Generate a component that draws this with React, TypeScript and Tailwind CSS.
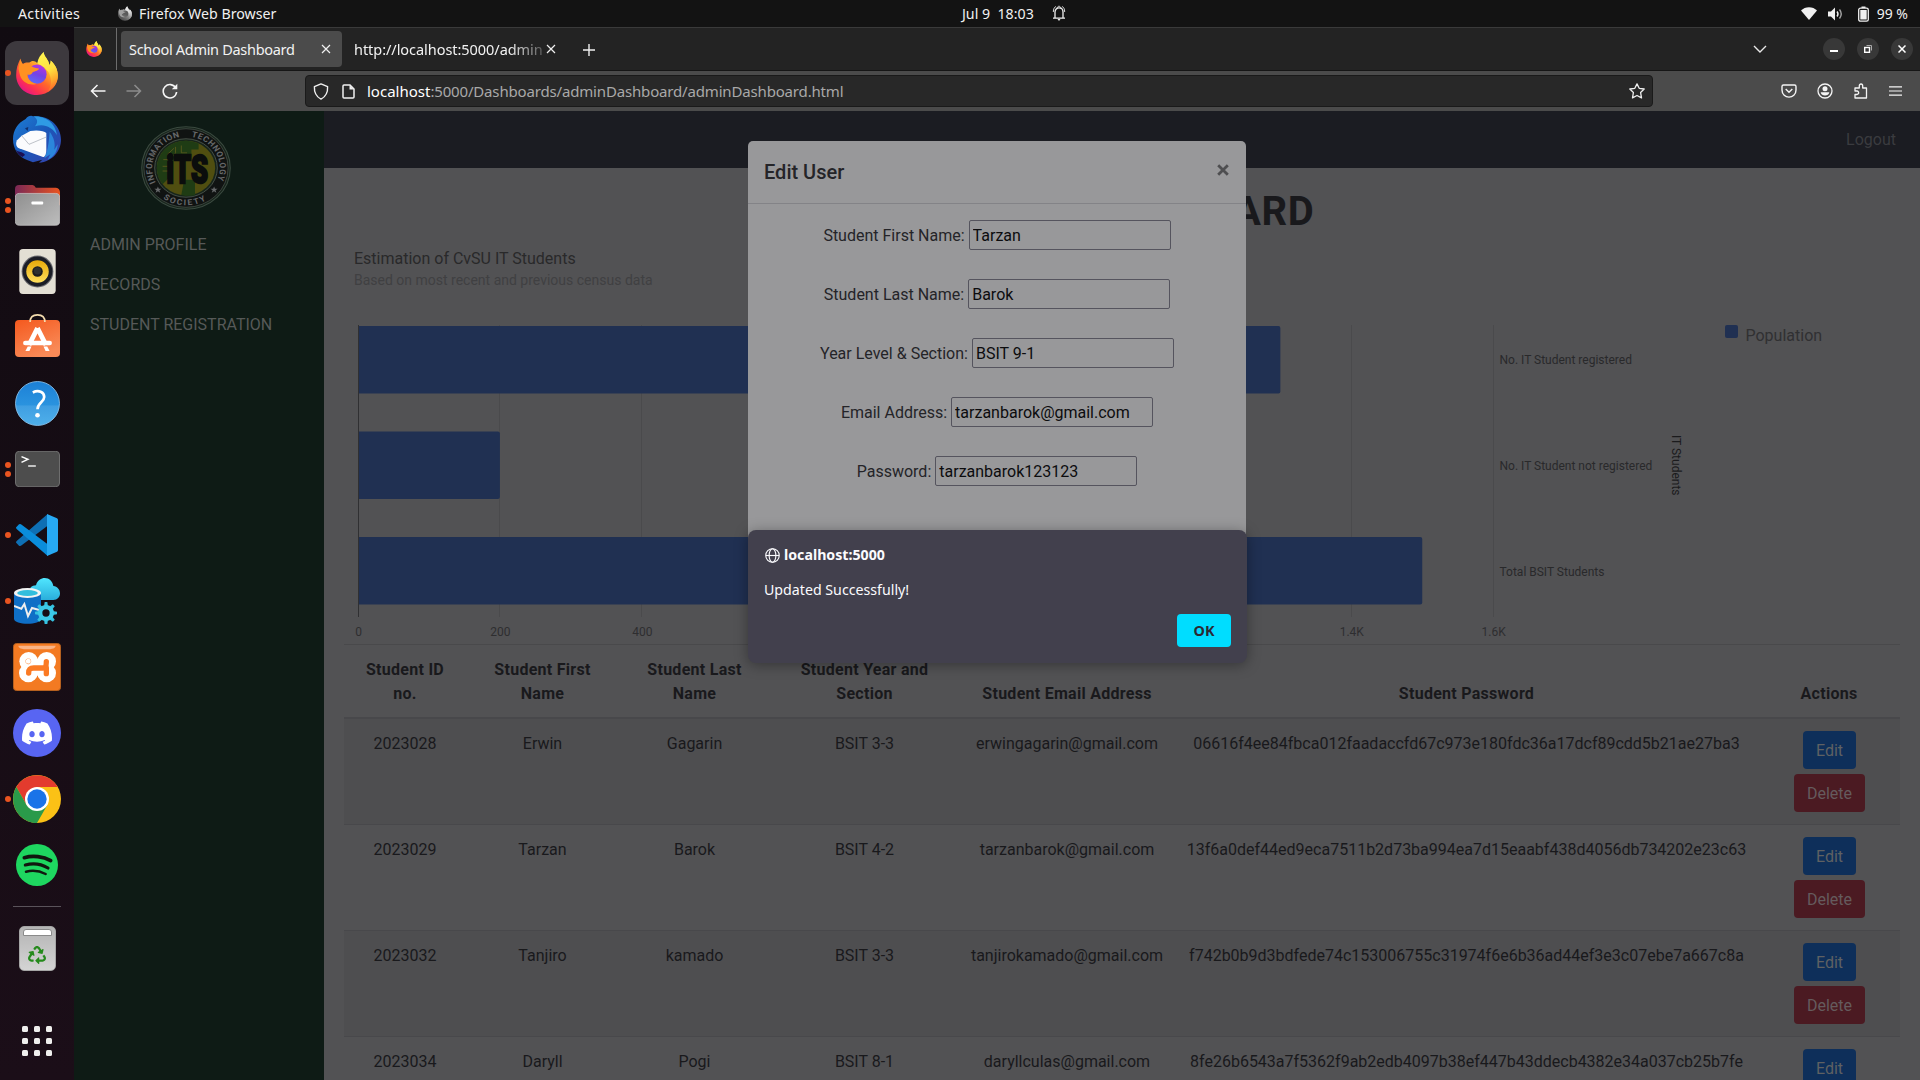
import React from "react";
import { FaRecycle } from "react-icons/fa";
import { SiDiscord } from "react-icons/si";

const UI = "font-['Noto_Sans','Open_Sans',sans-serif]";

/* ---------- Application icons ---------- */

function FirefoxIcon({ id, className }: { id: string; className: string }) {
  return (
    <svg viewBox="0 0 126 130" className={className}>
      <defs>
        <linearGradient id={`${id}-body`} x1="0.85" y1="0.1" x2="0.2" y2="0.95">
          <stop offset="0" stopColor="#fff44f" />
          <stop offset="0.3" stopColor="#ffb62a" />
          <stop offset="0.55" stopColor="#ff6a2a" />
          <stop offset="0.8" stopColor="#ff3150" />
          <stop offset="1" stopColor="#e31587" />
        </linearGradient>
        <linearGradient id={`${id}-globe`} x1="0.7" y1="0" x2="0.3" y2="1">
          <stop offset="0" stopColor="#b933e1" />
          <stop offset="0.5" stopColor="#7542e5" />
          <stop offset="1" stopColor="#5b6df8" />
        </linearGradient>
        <linearGradient id={`${id}-flame`} x1="0.3" y1="0" x2="0.6" y2="1">
          <stop offset="0" stopColor="#fff44f" />
          <stop offset="0.5" stopColor="#ffe141" />
          <stop offset="0.8" stopColor="#ffa52c" />
          <stop offset="1" stopColor="#ff6a2a" />
        </linearGradient>
      </defs>
      <path
        d="M83 0 C84 14 98 22 101 40 C104 34 105 30 104 26 C118 38 126 54 126 72 C126 104 98 130 63 130 C28 130 0 104 0 70 C0 50 5 36 13 20 C14 28 17 34 20 36 C27 31 33 32 40 32 C46 26 56 24 64 34 Z"
        fill={`url(#${id}-body)`}
      />
      <path
        d="M83 0 C84 14 98 22 101 40 C104 34 105 30 104 26 C118 38 126 54 126 72 C126 92 114 108 96 118 C108 104 108 84 100 66 C96 54 80 42 64 34 C66 18 74 8 83 0 Z"
        fill={`url(#${id}-flame)`}
      />
      <circle cx="63" cy="67" r="29" fill={`url(#${id}-globe)`} />
      <path
        d="M7 50 C8 38 12 28 14 22 C15 30 18 35 21 37 C28 33 36 34 42 38 C46 46 56 48 69 50 C68 56 58 58 50 61 C46 70 38 70 34 68 C34 84 48 94 62 96 C42 104 18 92 12 72 C10 64 8 56 7 50 Z"
        fill="#ff9122"
      />
    </svg>
  );
}

function ThunderbirdIcon() {
  return (
    <svg viewBox="0 0 144 144" className="size-12">
      <defs>
        <linearGradient id="tb" x1="0" y1="0" x2="1" y2="1">
          <stop offset="0" stopColor="#1c7fd6" />
          <stop offset="0.5" stopColor="#1b57b8" />
          <stop offset="1" stopColor="#3a3fae" />
        </linearGradient>
      </defs>
      <path d="M38 12 C44 4 54 0 60 4 C108 0 144 32 144 74 C144 108 118 140 78 143 L88 134 L60 142 L44 136 C16 126 0 102 0 72 C0 46 14 24 38 12 Z" fill="url(#tb)" />
      <path d="M62 4 C100 4 126 24 132 60 C118 36 92 24 66 34 C76 22 74 12 62 4 Z" fill="#2f9be4" />
      <path d="M110 50 C122 66 128 84 124 104 L134 88 C134 108 122 128 104 134 L112 118 L94 130 C106 104 108 74 110 50 Z" fill="#2b86dc" />
      <path d="M8 104 C14 112 30 108 36 120 L28 126 C18 120 12 112 8 104 Z" fill="#1c0f52" />
      <path d="M26 62 L52 48 C74 44 94 48 100 54 V104 C100 116 96 126 90 126 L18 100 C8 96 8 84 12 76 Z" fill="#fbfbfd" />
      <path d="M26 62 L48 88 L100 66" fill="none" stroke="#9fa4ae" strokeWidth="2" />
      <path d="M36 40 l10 -4 l-2 12 z" fill="#10306e" />
    </svg>
  );
}

function FilesIcon() {
  return (
    <svg viewBox="0 0 134 122" className="h-[41px] w-[45px]">
      <defs>
        <linearGradient id="fback" x1="0" y1="0" x2="1" y2="0">
          <stop offset="0" stopColor="#7a2856" />
          <stop offset="1" stopColor="#e95420" />
        </linearGradient>
        <linearGradient id="ffront" x1="0" y1="0" x2="1" y2="1">
          <stop offset="0" stopColor="#8f8f8f" />
          <stop offset="1" stopColor="#bdbdbd" />
        </linearGradient>
      </defs>
      <path d="M0 60 V12 Q0 0 12 0 H52 Q58 0 62 8 H122 Q134 10 134 22 V60 Z" fill="url(#fback)" />
      <rect x="1" y="25" width="132" height="95" rx="12" fill="url(#ffront)" stroke="#cfcfcf" strokeWidth="2" />
      <rect x="49" y="49" width="35" height="9" rx="3" fill="#fff" />
    </svg>
  );
}

function RhythmboxIcon() {
  return (
    <svg viewBox="0 0 110 136" className="h-[45px] w-[37px]">
      <defs>
        <linearGradient id="rb" x1="0" y1="0" x2="0" y2="1">
          <stop offset="0" stopColor="#e6a90a" />
          <stop offset="1" stopColor="#ffdf5c" />
        </linearGradient>
      </defs>
      <rect width="110" height="136" rx="11" fill="#e3dfd4" />
      <circle cx="55" cy="68" r="48" fill="#6b6b70" />
      <circle cx="55" cy="68" r="45" fill="#1b1d26" />
      <circle cx="55" cy="68" r="34" fill="url(#rb)" />
      <circle cx="55" cy="68" r="16" fill="#1d1d1f" />
      <circle cx="55" cy="66" r="11" fill="#2e3030" />
    </svg>
  );
}

function SoftwareIcon() {
  return (
    <svg viewBox="0 0 134 128" className="mb-[4px] h-[43px] w-[45px]">
      <defs>
        <linearGradient id="sw" x1="0" y1="0" x2="0.5" y2="1">
          <stop offset="0" stopColor="#f4591e" />
          <stop offset="1" stopColor="#f98a57" />
        </linearGradient>
      </defs>
      <rect y="18" width="134" height="110" rx="12" fill="url(#sw)" />
      <path d="M45 24 C45 8 54 2.500 67 2.500 C80 2.500 89 8 89 24" fill="none" stroke="#f3dcae" strokeWidth="5" />
      <path d="M67 42 L42 92 M67 42 L92 92" stroke="#fff" strokeWidth="14" strokeLinejoin="round" fill="none" />
      <rect x="24" y="80" width="86" height="13" rx="6.500" fill="#fff" />
      <path d="M38 97 l-7 13 h12 l6 -13 Z M96 97 l7 13 h-12 l-6 -13 Z" fill="#fff" />
    </svg>
  );
}

function HelpIcon() {
  return (
    <svg viewBox="0 0 134 134" className="size-[45px]">
      <defs>
        <linearGradient id="hp" x1="0" y1="0" x2="0" y2="1">
          <stop offset="0" stopColor="#1c80d6" />
          <stop offset="0.54" stopColor="#2a93df" />
          <stop offset="0.55" stopColor="#3f9ee2" />
          <stop offset="1" stopColor="#4fb0ea" />
        </linearGradient>
      </defs>
      <circle cx="67" cy="67" r="65.500" fill="url(#hp)" stroke="#8cc4ee" strokeWidth="2.500" />
      <path d="M53 34 C70 26 87 32 87 48 C87 63 67 64 67 84" fill="none" stroke="#fff" strokeWidth="8" />
      <circle cx="67" cy="102" r="7" fill="#fff" />
    </svg>
  );
}

function TerminalIcon() {
  return (
    <svg viewBox="0 0 134 108" className="h-9 w-[45px]">
      <rect x="1" y="1" width="132" height="106" rx="11" fill="#4d4d4d" stroke="#6e6e6e" strokeWidth="3" />
      <path d="M19 17 L38 25 L19 34" fill="none" stroke="#fff" strokeWidth="4.500" />
      <path d="M39 45 H62" stroke="#fff" strokeWidth="4" />
    </svg>
  );
}

function CodeIcon() {
  return (
    <svg viewBox="0 0 126 126" className="size-[42px]">
      <path d="M95 0 L2 81 Q-2 85 2 88 L9 95 Q13 97 17 94 L95 35 Z" fill="#0e6fb4" />
      <path d="M95 126 L2 45 Q-2 41 2 38 L9 31 Q13 29 17 32 L95 91 Z" fill="#0a8ddb" />
      <path d="M93 0 L123 13 Q126 15 126 18 V108 Q126 111 123 113 L93 126 Z" fill="#27a9f3" />
    </svg>
  );
}

function DataStudioIcon() {
  const teeth = [0, 45, 90, 135, 180, 225, 270, 315];
  return (
    <svg viewBox="0 0 138 138" className="size-[46px]">
      <defs>
        <linearGradient id="cl" x1="0" y1="0" x2="0" y2="1">
          <stop offset="0" stopColor="#50e6ff" />
          <stop offset="1" stopColor="#2aaedb" />
        </linearGradient>
      </defs>
      <path d="M50 28 C54 24 60 22 66 22 C70 6 82 0 92 0 C106 0 116 10 118 24 C130 26 138 34 138 46 C138 58 130 66 118 66 H70 C50 66 46 40 50 28 Z" fill="url(#cl)" />
      <path d="M0 46 V122 C0 142 81 142 81 122 V46 Z" fill="#0f6fc6" />
      <ellipse cx="40.500" cy="45" rx="40.500" ry="15" fill="#f3f3f3" />
      <ellipse cx="40.500" cy="45" rx="31" ry="9" fill="#32bedd" />
      <path d="M0 84 L22 92 L31 78 L42 114 L54 90 L76 96" fill="none" stroke="#eee" strokeWidth="6" />
      <g transform="translate(96 105)">
        {teeth.map((a) => (
          <path key={a} d="M-6 -20 L-4 -33 H4 L6 -20 Z" transform={`rotate(${a})`} fill="#35c1e0" />
        ))}
        <circle r="17.500" fill="none" stroke="#3cc9e8" strokeWidth="13" />
      </g>
    </svg>
  );
}

function XamppIcon() {
  return (
    <svg viewBox="0 0 144 144" className="size-12">
      <rect x="1.500" y="1.500" width="141" height="141" rx="9" fill="#f37a22" stroke="#b5601f" strokeWidth="3" />
      <path d="M16 8 H128 C126 20 110 19 72 19 C34 19 18 20 16 8 Z" fill="#f9b385" />
      <g fill="#fff">
        <circle cx="47" cy="55" r="28" />
        <circle cx="101" cy="55" r="28" />
        <circle cx="46" cy="90" r="28" />
        <circle cx="101" cy="90" r="28" />
        <rect x="40" y="48" width="66" height="50" />
      </g>
      <g fill="none" stroke="#fb7a24" strokeWidth="16" strokeLinecap="round">
        <circle cx="46" cy="55" r="0.500" />
        <path d="M47 90 C47 78 52 75 62 75 H90 C98 75 100 68 100 56" />
        <path d="M100 75 V92" />
      </g>
    </svg>
  );
}

function ChromeIcon() {
  return (
    <svg viewBox="0 0 144 144" className="size-12">
      <circle cx="72" cy="72" r="72" fill="#fbc116" />
      <path d="M10 36 A72 72 0 0 1 134 36 H72 L41 90 Z" fill="#e33b2e" />
      <path d="M10 36 A72 72 0 0 0 72 144 L103 90 L41 90 Z" fill="#2a9a4a" />
      <circle cx="72" cy="72" r="36" fill="#fff" />
      <circle cx="72" cy="72" r="29" fill="#1a73e8" />
    </svg>
  );
}

function SpotifyIcon() {
  return (
    <svg viewBox="0 0 126 126" className="size-[42px]">
      <circle cx="63" cy="63" r="63" fill="#1ed760" />
      <g fill="none" stroke="#11170f" strokeLinecap="round">
        <path d="M25 41 C50 34 82 37 104 50" strokeWidth="11" />
        <path d="M28 63 C50 57 76 60 96 72" strokeWidth="9.500" />
        <path d="M30 83 C50 78 70 80 89 90" strokeWidth="7.500" />
      </g>
    </svg>
  );
}

function DiscordIcon() {
  return (
    <div className="flex size-12 items-center justify-center rounded-full bg-[#5865f2]">
      <SiDiscord className="size-[30px] text-white" />
    </div>
  );
}

function TrashIcon() {
  return (
    <div className="flex h-[45px] w-[37px] flex-col items-center rounded-[5px] border border-[#a5a5a5] bg-linear-to-b from-[#b4b4b4] to-[#d4d4d4] pt-[2px]">
      <div className="h-[7px] w-[29px] rounded-t-[3px] border border-[#8a8a8a] bg-white" />
      <FaRecycle className="mt-[10px] size-[18px] text-[#258a1c]" />
    </div>
  );
}

function LauncherIcon() {
  return (
    <div className="grid grid-cols-3 gap-[6px]">
      {Array.from({ length: 9 }, (_, i) => (
        <span key={i} className="size-[6px] rounded-[1.500px] bg-[#efefed]" />
      ))}
    </div>
  );
}

/* ---------- Desktop shell ---------- */

function DockItem({ dots = 0, active = false, children }: { dots?: number; active?: boolean; children: React.ReactNode }) {
  return (
    <div className="relative flex h-[66px] w-[74px] items-center">
      {active && <div className="absolute top-[1px] left-[5px] size-16 rounded-xl bg-[#3d393e]" />}
      <div className="relative flex w-[11px] flex-col items-end gap-[3px]">
        {Array.from({ length: dots }, (_, i) => (
          <span key={i} className="size-[6px] rounded-full bg-[#e95420]" />
        ))}
      </div>
      <div className="relative flex w-[52px] items-center justify-center">{children}</div>
    </div>
  );
}

function Dock() {
  return (
    <nav className="flex w-[74px] shrink-0 flex-col bg-linear-to-b from-[#110b11] to-[#1b0e18] pt-[13px]">
      <DockItem dots={1} active>
        <FirefoxIcon id="dock" className="h-[43px] w-[42px]" />
      </DockItem>
      <DockItem><ThunderbirdIcon /></DockItem>
      <DockItem dots={2}><FilesIcon /></DockItem>
      <DockItem><RhythmboxIcon /></DockItem>
      <DockItem><SoftwareIcon /></DockItem>
      <DockItem><HelpIcon /></DockItem>
      <DockItem dots={2}><TerminalIcon /></DockItem>
      <DockItem dots={1}><CodeIcon /></DockItem>
      <DockItem dots={1}><DataStudioIcon /></DockItem>
      <DockItem><XamppIcon /></DockItem>
      <DockItem><DiscordIcon /></DockItem>
      <DockItem dots={1}><ChromeIcon /></DockItem>
      <DockItem><SpotifyIcon /></DockItem>
      <div className="mt-2 mb-2 ml-[13px] h-px w-12 bg-[#5a535a]" />
      <DockItem><TrashIcon /></DockItem>
      <div className="mt-[27px]">
        <DockItem><LauncherIcon /></DockItem>
      </div>
    </nav>
  );
}

function TopBar() {
  return (
    <div className={`grid h-[27px] shrink-0 grid-cols-3 items-center bg-[#131313] text-[14.200px] text-[#f0f0f0] ${UI}`}>
      <div className="flex items-center pl-[18px]">
        <span className="tracking-[0.300px]">Activities</span>
        <FirefoxIcon id="panel" className="mr-[7px] ml-[38px] h-[15px] w-[14px] grayscale" />
        <span>Firefox Web Browser</span>
      </div>
      <div className="flex items-center pl-[322px]">
        <span className="whitespace-pre">Jul 9  18:03</span>
        <svg viewBox="0 0 14 16" className="ml-[18px] h-4 w-[14px]" fill="none" stroke="#f0f0f0" strokeWidth="1.300">
          <path d="M1 13.200 H13 M3 13 V7 C3 1.500 11 1.500 11 7 V13" />
          <path d="M5 3.500 C5.500 0.500 8.500 0.500 9 3.500 M1.300 7 C1.300 3.800 2.500 2.200 3.800 1.500 M12.700 7 C12.700 3.800 11.500 2.200 10.200 1.500" strokeWidth="0.900" />
          <path d="M5.500 14 H8.500 L7 16 Z" fill="#f0f0f0" stroke="none" />
        </svg>
      </div>
      <div className="flex items-center justify-end pr-3">
        <svg viewBox="0 0 16 13" className="mr-[-1px] h-[13px] w-4" fill="#f0f0f0">
          <path d="M0 3.500 C4 -1 12 -1 16 3.500 L8 13 Z" />
        </svg>
        <svg viewBox="0 0 16 14" className="ml-3 h-[14px] w-4" fill="none" stroke="#f0f0f0" strokeWidth="1.400">
          <path d="M0 4.500 H3 L7 0.500 V13.500 L3 9.500 H0 Z" fill="#f0f0f0" stroke="none" />
          <path d="M9 4.500 Q11 7 9 9.500" />
          <path d="M11.500 2.500 Q15 7 11.500 11.500" stroke="#a5a5a5" />
        </svg>
        <svg viewBox="0 0 11 16" className="ml-[14px] h-4 w-[11px]">
          <path d="M3.500 0.500 H7.500 V2 H3.500 Z" fill="#f0f0f0" />
          <rect x="0.700" y="2.200" width="9.600" height="13" rx="1.800" fill="none" stroke="#f0f0f0" strokeWidth="1.300" />
          <rect x="2.300" y="4" width="6.400" height="9.500" fill="#f0f0f0" />
        </svg>
        <span className="ml-[8px] text-[14px]">99 %</span>
      </div>
    </div>
  );
}

/* ---------- Browser chrome ---------- */

function Cross({ className }: { className: string }) {
  return (
    <svg viewBox="0 0 10 10" className={className} fill="none" stroke="#f0f0f0" strokeWidth="1.200">
      <path d="M1 1 L9 9 M9 1 L1 9" />
    </svg>
  );
}

function TabStrip() {
  return (
    <div className={`flex h-11 items-center border-t border-b border-t-[#3a3a3a] border-b-[#161616] bg-[#232323] text-[#f2f2f2] ${UI}`}>
      <div className="flex h-full w-[43px] items-center justify-center border-r border-[#6d6d6d] pr-[3px]">
        <FirefoxIcon id="tab" className="size-4" />
      </div>
      <div className="ml-1 flex h-9 w-[221px] items-center justify-between rounded-[4px] bg-[#4b4b4b] pr-[11px] pl-2">
        <span className="pt-px text-[14.500px] tracking-[-0.300px] whitespace-nowrap">School Admin Dashboard</span>
        <Cross className="size-[10px]" />
      </div>
      <div className="ml-3 flex h-9 w-[202px] items-center justify-between">
        <span className="w-[188px] overflow-hidden [mask-image:linear-gradient(to_right,black_155px,transparent_200px)] pt-px text-[14.500px] tracking-[-0.050px] whitespace-nowrap">
          http://localhost:5000/admin
        </span>
        <Cross className="size-[10px] shrink-0" />
      </div>
      <svg viewBox="0 0 12 12" className="mt-px ml-[27px] size-3" fill="none" stroke="#f0f0f0" strokeWidth="1.400">
        <path d="M6 0 V12 M0 6 H12" />
      </svg>
      <svg viewBox="0 0 14 8" className="ml-auto h-2 w-[14px]" fill="none" stroke="#e8e8e8" strokeWidth="1.400">
        <path d="M1 1 L7 7 L13 1" />
      </svg>
      <div className="mr-[7px] ml-14 flex gap-3">
        <span className="flex size-[22px] items-center justify-center rounded-full bg-[#383838]">
          <span className="mt-[4px] h-[1.500px] w-2 bg-white" />
        </span>
        <span className="flex size-[22px] items-center justify-center rounded-full bg-[#383838]">
          <svg viewBox="0 0 8 8" className="size-2" fill="none">
            <rect x="0.700" y="2.500" width="4.800" height="4.800" stroke="#fff" strokeWidth="1.400" />
            <path d="M2.500 0.500 H7.500 V5.500" stroke="#aaa" />
          </svg>
        </span>
        <span className="flex size-[22px] items-center justify-center rounded-full bg-[#383838]">
          <svg viewBox="0 0 8 8" className="size-2" stroke="#fff" strokeWidth="1.500">
            <path d="M0.500 0.500 L7.500 7.500 M7.500 0.500 L0.500 7.500" />
          </svg>
        </span>
      </div>
    </div>
  );
}

function Toolbar() {
  return (
    <div className={`flex h-10 items-center bg-[#4b4b4b] ${UI}`}>
      <div className="flex w-[231px] items-center gap-5 pl-4">
        <svg viewBox="0 0 16 16" className="size-4" fill="none" stroke="#f5f5f5" strokeWidth="1.500">
          <path d="M15.500 8 H1.500 M7.500 2 L1.500 8 L7.500 14" />
        </svg>
        <svg viewBox="0 0 16 16" className="size-4" fill="none" stroke="#8c8c8c" strokeWidth="1.500">
          <path d="M0.500 8 H14.500 M8.500 2 L14.500 8 L8.500 14" />
        </svg>
        <svg viewBox="0 0 16 16" className="size-4" fill="none" stroke="#f5f5f5" strokeWidth="1.600">
          <path d="M13.800 5 A6.700 6.700 0 1 0 14.600 9" />
          <path d="M15.300 0.800 V6.300 H9.800 Z" fill="#f5f5f5" stroke="none" />
        </svg>
      </div>
      <div className="flex h-8 w-[1348px] items-center rounded-[4px] border border-[#1a1a1a] bg-[#282828] pr-[7px] pl-[7px] text-[15px]">
        <svg viewBox="0 0 16 17" className="h-[17px] w-4" fill="none" stroke="#f0f0f0" strokeWidth="1.400">
          <path d="M8 0.900 L14.600 3.600 C14.900 9 13 13.500 8 16.100 C3 13.500 1.100 9 1.400 3.600 Z" strokeLinejoin="round" />
        </svg>
        <svg viewBox="0 0 13 15" className="ml-[13px] h-[15px] w-[13px]" fill="none" stroke="#f0f0f0" strokeWidth="1.500">
          <path d="M1 2 Q1 1 2 1 H8 L12 5 V13 Q12 14 11 14 H2 Q1 14 1 13 Z" />
          <path d="M7.500 1 V5.500 H12 Z" fill="#f0f0f0" stroke="none" />
        </svg>
        <span className="ml-[12px] text-white">localhost</span>
        <span className="tracking-[-0.165px] text-[#a9a9a9]">:5000/Dashboards/adminDashboard/adminDashboard.html</span>
        <svg viewBox="0 0 16 16" className="ml-auto size-4" fill="none" stroke="#f0f0f0" strokeWidth="1.300" strokeLinejoin="round">
          <path d="M8 0.900 L10.200 5.300 L15.200 6 L11.600 9.500 L12.500 14.900 L8 12.500 L3.500 14.900 L4.400 9.500 L0.800 6 L5.800 5.300 Z" />
        </svg>
      </div>
      <div className="ml-auto flex items-center gap-5 pr-[18px]">
        <svg viewBox="0 0 16 16" className="size-4" fill="none" stroke="#f5f5f5" strokeWidth="1.400">
          <path d="M1 3.500 Q1 2 2.500 2 H13.500 Q15 2 15 3.500 V7 C15 16.500 1 16.500 1 7 Z" />
          <path d="M4.700 6 L8 9.200 L11.300 6" />
        </svg>
        <svg viewBox="0 0 16 16" className="size-4" fill="none" stroke="#f5f5f5" strokeWidth="1.300">
          <circle cx="8" cy="8" r="7" />
          <circle cx="8" cy="5.800" r="2.500" fill="#f5f5f5" stroke="none" />
          <path d="M3.700 9.300 H12.300 C12 11.500 10 12.600 8 12.600 C6 12.600 4 11.500 3.700 9.300 Z" fill="#f5f5f5" stroke="none" />
        </svg>
        <svg viewBox="0 0 16 16" className="size-4" fill="none" stroke="#f5f5f5" strokeWidth="1.300">
          <path d="M2 15 V11.500 H4 C6.200 11.500 6.200 8 4 8 H2 V5 H6.300 V3 C6.300 0.300 9.700 0.300 9.700 3 V5 H13.500 V15 Z" strokeLinejoin="round" />
        </svg>
        <svg viewBox="0 0 14 14" className="h-[14px] w-[13px]" stroke="#f5f5f5" strokeWidth="1.300">
          <path d="M0 2.500 H14 M0 7 H14 M0 11.500 H14" />
        </svg>
      </div>
    </div>
  );
}

/* ---------- Web page ---------- */

function SocietyLogo() {
  return (
    <svg viewBox="0 0 250 250" preserveAspectRatio="none" className="h-[84px] w-[90px]">
      <defs>
        <path id="arc-left" d="M41.200 167.700 A94 94 0 0 1 111.900 31.900" />
        <path id="arc-right" d="M139.700 32.200 A94 94 0 0 1 211.500 161.700" />
        <path id="arc-bottom" d="M61.300 215.900 A111 111 0 0 0 188.700 215.900" />
      </defs>
      <circle cx="125" cy="125" r="123" fill="#17241b" stroke="#3b4a40" strokeWidth="3" />
      <circle cx="125" cy="125" r="117" fill="#101312" stroke="#4a544c" strokeWidth="2" />
      <circle cx="125" cy="125" r="87" fill="#17241b" stroke="#4c574d" strokeWidth="2.500" />
      <circle cx="125" cy="125" r="81" fill="#504e10" />
      <path d="M125 44 A81 81 0 0 0 60 173 L82 150 V110 L104 92 H140 V70 H160 V52 A81 81 0 0 0 125 44 Z" fill="#1f3c14" />
      <path d="M120 160 H150 V206 A81 81 0 0 1 112 205 Z" fill="#1f3c14" />
      <g fill="none" stroke="#5b5a1d" strokeWidth="2.500">
        <path d="M62 100 H82 L96 80 V62 M74 84 L92 66 M112 58 V80 H128 M60 120 H74 M60 134 H76" />
      </g>
      <g fontFamily="Roboto, sans-serif" fontWeight="700" fontSize="24" fill="#66686a">
        <text textLength="174" lengthAdjust="spacing"><textPath href="#arc-left">INFORMATION</textPath></text>
        <text textLength="168" lengthAdjust="spacing"><textPath href="#arc-right">TECHNOLOGY</textPath></text>
        <text textLength="126" lengthAdjust="spacing"><textPath href="#arc-bottom">SOCIETY</textPath></text>
      </g>
      <g fill="#66686a">
        <path id="logo-star" d="M47 180 L49.500 187 L57 187 L51 191.500 L53.500 199 L47 194.500 L40.500 199 L43 191.500 L37 187 L44.500 187 Z" />
        <use href="#logo-star" x="156" />
      </g>
      <text x="71" y="170" textLength="115" lengthAdjust="spacingAndGlyphs" fontFamily="Roboto, sans-serif" fontWeight="900" fontSize="116" fill="#0b0d0c" stroke="#0b0d0c" strokeWidth="7">
        iTS
      </text>
    </svg>
  );
}

function Sidebar() {
  return (
    <aside className="flex w-[250px] shrink-0 flex-col bg-[#0e1b15] text-[16px] text-[#565958]">
      <div className="flex justify-center pt-[15px] pr-[27px]">
        <SocietyLogo />
      </div>
      <ul className="mt-[15px] pl-4">
        <li className="h-10 leading-[40px]">ADMIN PROFILE</li>
        <li className="h-10 leading-[40px]">RECORDS</li>
        <li className="h-10 leading-[40px]">STUDENT REGISTRATION</li>
      </ul>
    </aside>
  );
}

const TICKS = ["0", "200", "400", "600", "800", "1K", "1.2K", "1.4K", "1.6K"];
const BARS = [
  { y: 90, value: 1300, label: "No. IT Student registered" },
  { y: 195.5, value: 200, label: "No. IT Student not registered" },
  { y: 301, value: 1500, label: "Total BSIT Students" },
];

function PopulationChart() {
  const x0 = 14.5;
  const step = 141.9;
  return (
    <svg width="1556" height="408" viewBox="0 0 1556 408" className="block shrink-0" fontFamily="Roboto, sans-serif">
      <text x="10" y="28" fontSize="16" fill="#29292a">Estimation of CvSU IT Students</text>
      <text x="10" y="49" fontSize="14" fill="#404042">Based on most recent and previous census data</text>
      {TICKS.map((t, i) => (
        <g key={t}>
          <path d={`M${Math.round(x0 + i * step) - 0.5} 89 V381`} stroke={i === 0 ? "#303032" : "#4a4a4c"} />
          {(i < 3 || i > 6) && (
            <text x={x0 + i * step} y="400" fontSize="12" fill="#2e2e30" textAnchor="middle">{t}</text>
          )}
        </g>
      ))}
      {BARS.map((b, i) => (
        <g key={b.label}>
          <path
            d={`M15 ${b.y} H${x0 + (b.value / 200) * step - 2.5} q2 0 2 2 v63.500 q0 2 -2 2 H15 Z`}
            fill="#203052"
          />
          <text x="1155.500" y={128 + i * 106} fontSize="12" fill="#29292b">{b.label}</text>
        </g>
      ))}
      <text transform="translate(1328 199) rotate(90)" fontSize="12" fill="#1b1b1d">IT Students</text>
      <rect x="1381" y="89" width="13" height="13" rx="2" fill="#203052" />
      <text x="1401.500" y="104.500" fontSize="16" fill="#303032">Population</text>
    </svg>
  );
}

const COLUMNS = ["Student ID no.", "Student First Name", "Student Last Name", "Student Year and Section", "Student Email Address", "Student Password", "Actions"];
const ROWS = [
  ["2023028", "Erwin", "Gagarin", "BSIT 3-3", "erwingagarin@gmail.com", "06616f4ee84fbca012faadaccfd67c973e180fdc36a17dcf89cdd5b21ae27ba3"],
  ["2023029", "Tarzan", "Barok", "BSIT 4-2", "tarzanbarok@gmail.com", "13f6a0def44ed9eca7511b2d73ba994ea7d15eaabf438d4056db734202e23c63"],
  ["2023032", "Tanjiro", "kamado", "BSIT 3-3", "tanjirokamado@gmail.com", "f742b0b9d3bdfede74c153006755c31974f6e6b36ad44ef3e3c07ebe7a667c8a"],
  ["2023034", "Daryll", "Pogi", "BSIT 8-1", "daryllculas@gmail.com", "8fe26b6543a7f5362f9ab2edb4097b38ef447b43ddecb4382e34a037cb25b7fe"],
];
const GRID = "grid grid-cols-[122px_153px_151px_189px_216px_583px_142px]";

function StudentTable() {
  return (
    <div className="w-[1556px] shrink-0 text-center text-[16px] leading-6 text-[#19191c]">
      <div className={`${GRID} h-[75px] items-end border-t border-b-2 border-t-[#49494b] border-b-[#48484b] pb-[11px] font-bold tracking-[0.270px]`}>
        {COLUMNS.map((c) => (
          <div key={c} className="px-3">{c}</div>
        ))}
      </div>
      {ROWS.map((row, i) => (
        <div key={row[0]} className={`${GRID} h-[106px] border-b border-[#48484b] pt-[12px] ${i % 2 === 0 ? "bg-[#4e4e50]" : ""}`}>
          {row.map((cell, j) => (
            <div key={j} className="pt-px whitespace-nowrap">{cell}</div>
          ))}
          <div className="flex flex-col items-center gap-[5px] pl-px">
            <button className="h-[38px] w-[53px] rounded-[4px] bg-[#0e2f5a] pt-px text-[#5f6163]">Edit</button>
            <button className="h-[38px] w-[71px] rounded-[4px] bg-[#4b1a22] pt-px text-[#655b5d]">Delete</button>
          </div>
        </div>
      ))}
    </div>
  );
}

/* ---------- Dialogs ---------- */

const FIELDS = [
  { label: "Student First Name:", value: "Tarzan" },
  { label: "Student Last Name:", value: "Barok" },
  { label: "Year Level & Section:", value: "BSIT 9-1" },
  { label: "Email Address:", value: "tarzanbarok@gmail.com" },
  { label: "Password:", value: "tarzanbarok123123" },
];

function EditUserModal() {
  return (
    <section className="absolute top-[30px] left-[674px] h-[430px] w-[498px] rounded-[5px] bg-[#98989a] text-[16px] text-[#242428]">
      <header className="flex h-[63px] justify-between border-b border-[#838387] px-4 pt-4">
        <h5 className="text-[20px] leading-[30px] font-medium">Edit User</h5>
        <svg viewBox="0 0 12 12" className="mt-[7px] mr-px size-3" stroke="#4e4e50" strokeWidth="2.800">
          <path d="M1.200 1.200 L10.800 10.800 M10.800 1.200 L1.200 10.800" />
        </svg>
      </header>
      <form className="flex flex-col gap-[29px] pt-4">
        {FIELDS.map((f) => (
          <label key={f.label} className="flex h-[30px] items-center justify-center gap-1">
            <span className="pt-px">{f.label}</span>
            <input defaultValue={f.value} className="h-[30px] w-[202px] rounded-[2px] border border-[#55545e] bg-transparent px-[3px] pt-px text-[#0c0c0e] outline-none" />
          </label>
        ))}
      </form>
    </section>
  );
}

function AlertDialog() {
  return (
    <section className={`absolute top-[419px] left-[674px] flex h-[133px] w-[499px] flex-col rounded-lg bg-[#42404d] p-4 text-[14.200px] text-[#fbfbfe] shadow-[0_2px_14px_rgba(0,0,0,0.35)] ${UI}`}>
      <div className="mt-px flex h-4 items-center gap-1 pl-px font-bold">
        <svg viewBox="0 0 16 16" className="size-[15px]" fill="none" stroke="#fbfbfe" strokeWidth="1.200">
          <circle cx="8" cy="8" r="7.200" />
          <ellipse cx="8" cy="8" rx="3.600" ry="7.200" />
          <path d="M1 8 H15" />
        </svg>
        <span>localhost:5000</span>
      </div>
      <p className="mt-[16px] leading-[22px]">Updated Successfully!</p>
      <button className="mt-[13px] h-[33px] w-[54px] shrink-0 self-end rounded-[4px] bg-[#00ddff] text-[14.400px] font-bold text-[#2b2a33]">OK</button>
    </section>
  );
}

export default function App() {
  return (
    <div className="flex h-[1080px] w-[1920px] flex-col overflow-hidden bg-[#131313]">
      <TopBar />
      <div className="flex min-h-0 flex-1">
        <Dock />
        <div className="flex min-w-0 flex-1 flex-col">
          <TabStrip />
          <Toolbar />
          <div className="relative flex min-h-0 flex-1 overflow-hidden bg-[#525254] font-['Roboto',sans-serif]">
            <Sidebar />
            <main className="flex min-w-0 flex-1 flex-col items-center overflow-hidden">
              <header className="flex h-[57px] w-full shrink-0 items-center justify-end bg-[#1b1c22] pt-px pr-6 text-[16px] text-[#3a3b3f]">Logout</header>
              <h1 className="mt-[20px] h-12 shrink-0 pl-[2px] text-[40px] leading-[48px] font-bold tracking-[0.550px] text-[#19191c]">ADMIN DASHBOARD</h1>
              <PopulationChart />
              <StudentTable />
            </main>
            <EditUserModal />
            <AlertDialog />
          </div>
        </div>
      </div>
    </div>
  );
}
